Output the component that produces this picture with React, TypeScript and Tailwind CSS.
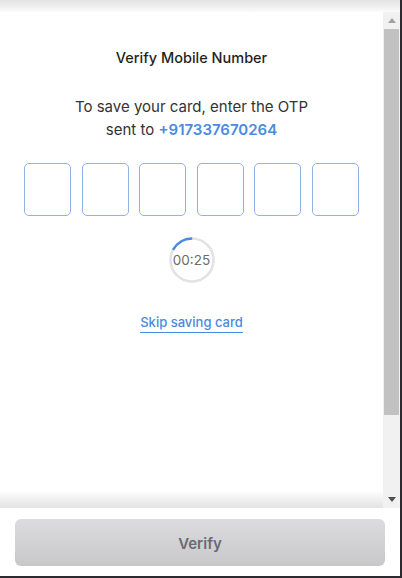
import React from 'react'

const font = { fontFamily: 'Inter, "Noto Sans", sans-serif' }

function Timer() {
  const r = 21.5
  const c = 2 * Math.PI * r
  const arc = c * (62 / 360)
  return (
    <div className="relative w-[48px] h-[48px]">
      <svg width="48" height="48" viewBox="0 0 48 48" className="absolute inset-0">
        <circle cx="24" cy="24" r={r} fill="none" stroke="#e2e2e2" strokeWidth="2.5" />
        <circle
          cx="24"
          cy="24"
          r={r}
          fill="none"
          stroke="#4a8ae0"
          strokeWidth="2.5"
          strokeDasharray={`${arc} ${c}`}
          transform="rotate(-152 24 24)"
        />
      </svg>
      <div className="absolute inset-0 flex items-center justify-center text-[13.5px] text-[#6b6b6b]">00:25</div>
    </div>
  )
}

export default function App() {
  return (
    <div style={font} className="w-[402px] h-[578px] bg-white flex flex-col border-r-2 border-b-2 border-[#2c2a2e] overflow-hidden">
      {/* top shade */}
      <div className="h-[12px] shrink-0 bg-gradient-to-b from-[#e2e2e4] to-[#fbfbfb]" />

      {/* scroll area */}
      <div className="relative flex h-[496px] shrink-0">
        <div className="flex-1 flex flex-col items-center">
          <h1 className="mt-[37px] text-[14.5px] font-medium text-[#1f1f1f] leading-[18px]">Verify Mobile Number</h1>
          <p className="mt-[28px] text-[15px] leading-[23px] text-[#333] text-center">
            To save your card, enter the OTP
            <br />
            sent to <span className="font-semibold text-[#4a8ae0]">+917337670264</span>
          </p>

          <div className="mt-[22px] flex gap-[10.6px]">
            {[0, 1, 2, 3, 4, 5].map((i) => (
              <div key={i} className="w-[47px] h-[53px] rounded-[5px] border border-[#8fb2e6]" />
            ))}
          </div>

          <div className="mt-[20px]">
            <Timer />
          </div>

          <a className="mt-[30px] text-[13px] font-medium text-[#4a8ae0] border-b border-[#4a8ae0] leading-[17px] pb-[1px]">
            Skip saving card
          </a>
        </div>

        {/* scrollbar */}
        <div className="w-[17px] shrink-0 bg-[#f1f1f1] flex flex-col items-center">
          <div className="h-[17px] flex items-center justify-center">
            <svg width="8" height="5" viewBox="0 0 8 5">
              <path d="M0 5 L4 0 L8 5 Z" fill="#a3a3a3" />
            </svg>
          </div>
          <div className="w-[15px] h-[386px] bg-[#c1c1c1]" />
          <div className="flex-1" />
          <div className="h-[17px] flex items-center justify-center">
            <svg width="8" height="5" viewBox="0 0 8 5">
              <path d="M0 0 L8 0 L4 5 Z" fill="#505050" />
            </svg>
          </div>
        </div>

        {/* bottom shade */}
        <div className="absolute left-0 right-[17px] bottom-0 h-[18px] bg-gradient-to-b from-[#ffffff] to-[#e3e3e5]" />
      </div>

      {/* footer */}
      <div className="flex-1 bg-white px-[15px] pt-[11px]">
        <button className="w-full h-[47px] pt-[3px] rounded-[6px] bg-gradient-to-b from-[#dcdcdf] to-[#c8c8cb] text-[15px] font-semibold text-[#6a6a70]">
          Verify
        </button>
      </div>
    </div>
  )
}
